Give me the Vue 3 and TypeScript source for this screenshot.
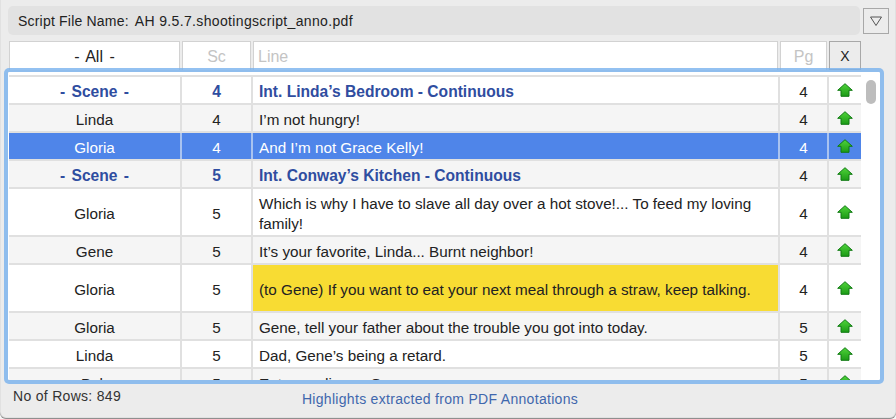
<template>
  <div class="window">
    <div class="file-row">
      <div class="file-name">
        <span class="file-label">Script File Name:</span>
        <span class="file-value">{{ fileName }}</span>
      </div>
      <button class="menu-btn">
        <svg width="14" height="12" viewBox="0 0 14 12">
          <path d="M1.5 2 H12.5 L7 10.5 Z" fill="none" stroke="#555" stroke-width="1" />
        </svg>
      </button>
    </div>

    <div class="filters">
      <div class="filter f-name all">- All -</div>
      <div class="filter f-sc hint center">Sc</div>
      <div class="filter f-line hint">Line</div>
      <div class="filter f-pg hint center">Pg</div>
      <button class="filter f-x clear">X</button>
    </div>

    <div class="frame">
      <div class="rows">
        <div
          v-for="(row, i) in rows"
          :key="i"
          class="row"
          :class="{ alt: i % 2 === 1, scene: row.scene, selected: row.selected, tall: row.tall }"
        >
          <div class="cell col-name center">{{ row.name }}</div>
          <div class="cell col-sc center">{{ row.sc }}</div>
          <div class="cell col-line" :class="{ marked: row.marked }">{{ row.line }}</div>
          <div class="cell col-pg center">{{ row.pg }}</div>
          <div class="cell col-x center">
            <svg width="16" height="14" viewBox="0 0 16 14">
              <defs>
                <linearGradient id="arrow-fill" x1="0" y1="0" x2="0" y2="1">
                  <stop offset="0" stop-color="#4fd43a" />
                  <stop offset="1" stop-color="#1c9a16" />
                </linearGradient>
              </defs>
              <path
                d="M8 .7 L15.3 7.3 H12 V13.3 H4 V7.3 H.7 Z"
                fill="url(#arrow-fill)"
                stroke="#0f7a12"
                stroke-width="1"
                stroke-linejoin="round"
              />
            </svg>
          </div>
        </div>
      </div>
      <div class="thumb"></div>
    </div>

    <div class="status">
      <span class="count">No of Rows: 849</span>
      <span class="note">Highlights extracted from PDF Annotations</span>
    </div>
  </div>
</template>

<script setup lang="ts">
interface Row {
  name: string;
  sc: number;
  line: string;
  pg: number;
  scene?: boolean;
  selected?: boolean;
  tall?: boolean;
  marked?: boolean;
}

const fileName = "AH 9.5.7.shootingscript_anno.pdf";

const rows: Row[] = [
  { name: "- Scene -", sc: 4, line: "Int. Linda’s Bedroom - Continuous", pg: 4, scene: true },
  { name: "Linda", sc: 4, line: "I’m not hungry!", pg: 4 },
  { name: "Gloria", sc: 4, line: "And I’m not Grace Kelly!", pg: 4, selected: true },
  { name: "- Scene -", sc: 5, line: "Int. Conway’s Kitchen - Continuous", pg: 4, scene: true },
  {
    name: "Gloria",
    sc: 5,
    line: "Which is why I have to slave all day over a hot stove!... To feed my loving family!",
    pg: 4,
    tall: true,
  },
  { name: "Gene", sc: 5, line: "It’s your favorite, Linda... Burnt neighbor!", pg: 4 },
  {
    name: "Gloria",
    sc: 5,
    line: "(to Gene) If you want to eat your next meal through a straw, keep talking.",
    pg: 4,
    tall: true,
    marked: true,
  },
  { name: "Gloria", sc: 5, line: "Gene, tell your father about the trouble you got into today.", pg: 5 },
  { name: "Linda", sc: 5, line: "Dad, Gene’s being a retard.", pg: 5 },
  { name: "Bob", sc: 5, line: "Eat your dinner, Gene.", pg: 5 },
];
</script>

<style>
html,
body {
  margin: 0;
  background: #f4f4f4;
}
</style>

<style scoped>
.window {
  width: 896px;
  height: 419px;
  box-sizing: border-box;
  padding-top: 6px;
  background: #ececec;
  border-radius: 0 0 6px 6px;
  box-shadow: inset 0 -1px 1px #858585;
  font-family: "Liberation Sans", Arial, sans-serif;
  color: #222;
  overflow: hidden;
}

.file-row {
  display: flex;
  align-items: center;
  gap: 3px;
  margin-left: 8px;
}

.file-name {
  width: 852px;
  height: 29px;
  box-sizing: border-box;
  display: flex;
  align-items: center;
  gap: 6px;
  padding-left: 10px;
  background: #e2e2e2;
  border-radius: 5px;
  font-size: 14px;
}

.file-label {
  letter-spacing: 0.2px;
}

.file-value {
  letter-spacing: 0.35px;
}

.menu-btn {
  width: 26px;
  height: 26px;
  padding: 0;
  display: flex;
  align-items: center;
  justify-content: center;
  background: #ececec;
  border: 1px solid #a8a8a8;
}

.filters {
  display: flex;
  gap: 2px;
  height: 29px;
  margin: 6px 0 0 9px;
  font-size: 16px;
}

.filter {
  box-sizing: border-box;
  display: flex;
  align-items: center;
  padding-top: 2px;
  background: #fff;
  border: 1px solid #d2d2d2;
  border-bottom: none;
}

.f-name {
  width: 171px;
}

.f-sc {
  width: 69px;
}

.f-line {
  width: 525px;
}

.f-pg {
  width: 47px;
}

.f-x {
  width: 32px;
}

.all {
  justify-content: center;
  color: #222;
  word-spacing: 2px;
}

.hint {
  color: #c4c4c4;
  padding-left: 4px;
}

.hint.center {
  justify-content: center;
  padding-left: 0;
}

.clear {
  justify-content: center;
  padding: 0;
  background: #ececec;
  border: 1px solid #a8a8a8;
  font: inherit;
  font-size: 14px;
  color: #222;
}

.col-name {
  width: 173px;
  flex: none;
}

.col-sc {
  width: 71px;
  flex: none;
}

.col-line {
  width: 527px;
  flex: none;
}

.col-pg {
  width: 49px;
  flex: none;
}

.col-x {
  width: 32px;
  flex: none;
}

.frame {
  position: relative;
  z-index: 1;
  width: 880px;
  height: 316px;
  box-sizing: border-box;
  margin: -2px 0 0 4px;
  padding-top: 3px;
  background: #fff;
  background-clip: padding-box;
  border: 4px solid rgba(120, 178, 238, 0.8);
  border-radius: 5px;
  overflow: hidden;
}

.rows {
  width: 852px;
  margin-left: 1px;
}

.row {
  display: flex;
  height: 28px;
  box-sizing: border-box;
  background: #fff;
  border-top: 2px solid #e0e0e0;
  font-size: 15.25px;
}

.row.tall {
  height: 48px;
}

.row.alt {
  background: #f5f5f5;
}

.row.selected {
  background: #4f85e9;
  color: #fff;
}

.row.selected .cell {
  border-right-color: #a9c3f0;
}

.row.scene .col-name,
.row.scene .col-sc,
.row.scene .col-line {
  color: #2f4da0;
  font-weight: bold;
  font-size: 15.6px;
}

.row.scene .col-name {
  word-spacing: 2px;
}

.cell {
  box-sizing: border-box;
  display: flex;
  align-items: center;
  padding-top: 3px;
  border-right: 2px solid #e0e0e0;
  line-height: 20px;
}

.col-line.cell {
  padding-left: 6px;
  padding-right: 20px;
}

.cell.col-x {
  border-right: none;
  padding-top: 0;
  padding-right: 1px;
}

.center {
  justify-content: center;
}

.marked {
  background: #f8dc33;
}

.thumb {
  position: absolute;
  top: 8px;
  right: 4px;
  width: 10px;
  height: 24px;
  border-radius: 5px;
  background: #bdbdbd;
}

.status {
  position: relative;
  display: flex;
  justify-content: center;
  padding: 6px 0 0 0;
  font-size: 14px;
  letter-spacing: 0.3px;
}

.count {
  position: absolute;
  left: 13px;
  top: 4px;
  color: #333;
}

.note {
  margin-top: 1px;
  margin-left: -16px;
  color: #3f67ad;
}
</style>
